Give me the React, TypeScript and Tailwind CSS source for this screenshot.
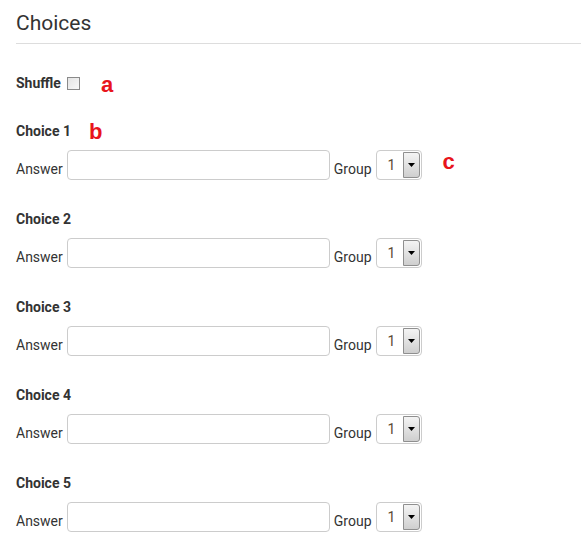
import React from "react"

const choices = [1, 2, 3, 4, 5]

function Mark({ letter, className }: { letter: string; className?: string }) {
  return (
    <span
      className={"text-[22px] font-bold leading-none text-[#e8141c] " + (className ?? "")}
      style={{ fontFamily: '"Liberation Sans", Arial, sans-serif' }}
    >
      {letter}
    </span>
  )
}

function GroupSelect() {
  return (
    <div className="flex h-[30px] w-[46px] items-center justify-between rounded-[4px] border border-[#ccc] bg-white pl-[11px] pr-[1px]">
      <span className="text-[14px] text-[#5c4a36]">1</span>
      <span className="flex h-[26px] w-[17px] items-center justify-center rounded-r-[3px] border border-[#8f8f8f] bg-gradient-to-b from-[#f4f4f4] to-[#cfcfcf]">
        <svg width="7" height="4" viewBox="0 0 7 4">
          <path d="M0 0h7L3.5 4z" fill="#000" />
        </svg>
      </span>
    </div>
  )
}

function ChoiceRow({ n }: { n: number }) {
  return (
    <div className={n === 1 ? "mt-[28px]" : "mt-[29px]"}>
      <div className="flex h-5 items-center">
        <span className="font-bold">Choice {n}</span>
        {n === 1 && <Mark letter="b" className="ml-[18px] mt-[2px]" />}
      </div>
      <div className="mt-[9px] flex items-end">
        <span className="mr-1 leading-5 pb-[1px]">Answer</span>
        <input
          type="text"
          className="h-[30px] w-[263px] rounded-[4px] border border-[#ccc] bg-white outline-none"
        />
        <span className="ml-1 mr-1 leading-5 pb-[1px]">Group</span>
        <GroupSelect />
        {n === 1 && <Mark letter="c" className="mb-[7px] ml-[21px]" />}
      </div>
    </div>
  )
}

export default function App() {
  return (
    <div
      className="min-h-[551px] bg-white pl-4 text-[14px] leading-5 text-[#333]"
      style={{ fontFamily: 'Roboto, "Liberation Sans", sans-serif' }}
    >
      <h3 className="border-b border-[#ddd] pt-2 pb-[5px] text-[21px] leading-[30px] font-normal">
        Choices
      </h3>

      <div className="mt-[29px] flex h-5 items-center">
        <span className="font-bold">Shuffle</span>
        <span className="ml-[6px] h-[13px] w-[13px] border border-[#8a8a8a] bg-gradient-to-br from-[#e4e4e4] to-[#f8f8f8]" />
        <Mark letter="a" className="ml-[21px] mt-[4px]" />
      </div>

      {choices.map((n) => (
        <ChoiceRow key={n} n={n} />
      ))}
    </div>
  )
}
